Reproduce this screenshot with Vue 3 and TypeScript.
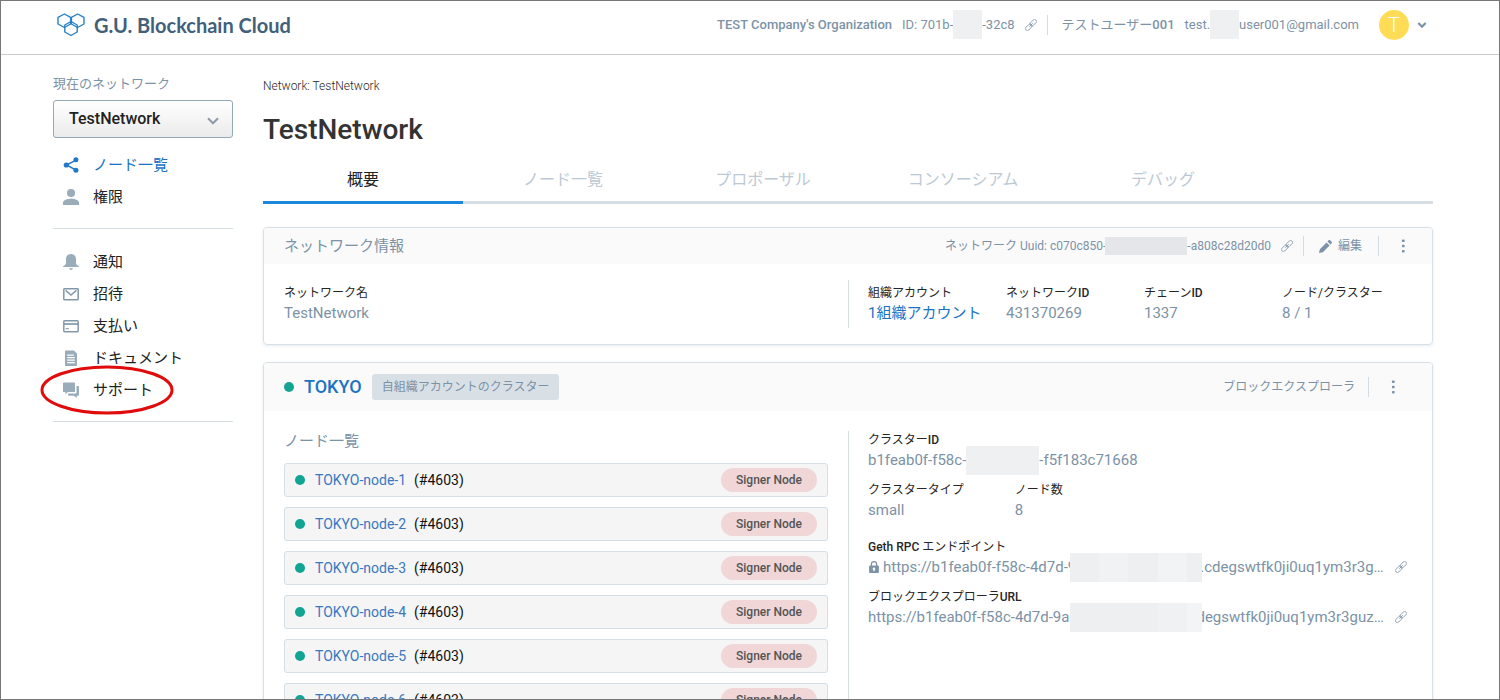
<script setup lang="ts">
import { ref } from 'vue'

interface NavItem {
  icon: 'share' | 'person' | 'bell' | 'mail' | 'card' | 'doc' | 'chat'
  label: string
  active?: boolean
  circled?: boolean
}

const networkNav: NavItem[] = [
  { icon: 'share', label: 'ノード一覧', active: true },
  { icon: 'person', label: '権限' },
]

const accountNav: NavItem[] = [
  { icon: 'bell', label: '通知' },
  { icon: 'mail', label: '招待' },
  { icon: 'card', label: '支払い' },
  { icon: 'doc', label: 'ドキュメント' },
  { icon: 'chat', label: 'サポート', circled: true },
]

const navGroups: NavItem[][] = [networkNav, accountNav]

const tabs: string[] = ['概要', 'ノード一覧', 'プロポーザル', 'コンソーシアム', 'デバッグ']
const activeTab = ref<number>(0)
const network = ref<string>('TestNetwork')

interface Fact {
  label: string
  suffix?: string
  value: string
  link?: boolean
}

const facts: Fact[] = [
  { label: '組織アカウント', value: '1組織アカウント', link: true },
  { label: 'ネットワーク', suffix: 'ID', value: '431370269' },
  { label: 'チェーン', suffix: 'ID', value: '1337' },
  { label: 'ノード/クラスター', value: '8 / 1' },
]

const nodes: string[] = [1, 2, 3, 4, 5, 6].map((n) => `TOKYO-node-${n}`)
</script>

<template>
  <div class="frame">
    <svg class="defs" width="0" height="0" aria-hidden="true">
      <symbol id="i-link" viewBox="0 0 12 12">
        <g transform="rotate(-45 6 6)" fill="none" stroke="currentColor" stroke-width="0.8">
          <rect x="-1" y="4.1" width="7.6" height="3.8" rx="1.7" />
          <rect x="5.4" y="4.1" width="7.6" height="3.8" rx="1.7" />
          <path d="M3.6 6h4.8" />
        </g>
      </symbol>
      <symbol id="i-dots" viewBox="0 0 4 14">
        <rect x="1" y="0.5" width="2.6" height="2.6" rx="0.7" />
        <rect x="1" y="5.7" width="2.6" height="2.6" rx="0.7" />
        <rect x="1" y="10.9" width="2.6" height="2.6" rx="0.7" />
      </symbol>
      <symbol id="i-share" viewBox="0 0 16 16">
        <path d="M13 3.2 3.6 8l9.4 5.2" fill="none" stroke="currentColor" stroke-width="1.5" />
        <circle cx="12.9" cy="2.8" r="2.5" />
        <circle cx="3.3" cy="8" r="2.6" />
        <circle cx="12.9" cy="13.3" r="2.5" />
      </symbol>
      <symbol id="i-person" viewBox="0 0 16 16">
        <circle cx="8" cy="4" r="4" />
        <path d="M0 16v-2.2C0 11.2 4.5 9.8 8 9.8s8 1.4 8 4V16z" />
      </symbol>
      <symbol id="i-bell" viewBox="0 0 16 16">
        <path d="M8 0C4.9 0 3 2.2 3 5.2v3.600c0 1.600-1 2.600-3 3.600v.6h16v-.6c-2-1-3-2-3-3.600V5.200C13 2.200 11.100 0 8 0zM6 14.200c.3 1.100 1 1.700 2 1.700s1.700-.6 2-1.700z" />
      </symbol>
      <symbol id="i-mail" viewBox="0 0 16 16">
        <rect x="0.8" y="2.8" width="14.4" height="10.9" rx="0.7" fill="none" stroke="currentColor" stroke-width="1.5" />
        <path d="M2.600 4.400 8 9l5.400-4.600" fill="none" stroke="currentColor" stroke-width="1.4" />
      </symbol>
      <symbol id="i-card" viewBox="0 0 16 16">
        <rect x="0.8" y="2.8" width="14.4" height="10.9" rx="0.9" fill="none" stroke="currentColor" stroke-width="1.5" />
        <path d="M1 6h14" fill="none" stroke="currentColor" stroke-width="1.7" />
        <path d="M2.600 10.700h3.200" fill="none" stroke="currentColor" stroke-width="1.1" />
      </symbol>
      <symbol id="i-doc" viewBox="0 0 16 16">
        <path fill-rule="evenodd" d="M2 1.200C2 .8 2.400.6 2.800.6H11l3 3v11.600c0 .4-.3.800-.8.800H2.800c-.5 0-.8-.4-.8-.8zM4.200 4.600v1.100h6.600V4.600zm0 2.500v1.100h7.600V7.100zm0 2.500v1.100h7.600V9.600zm0 2.500v1.100h7.600v-1.100z" />
      </symbol>
      <symbol id="i-chat" viewBox="0 0 16 16">
        <path d="M.8.400h10.400c.4 0 .8.300.8.700v8.300c0 .4-.4.700-.8.700H5l-2.600 2.200V10.100H.8c-.5 0-.8-.3-.8-.7V1.100C0 .7.300.400.8.400z" />
        <path d="M13.500 4h1.700c.5 0 .8.300.8.700v8.300c0 .4-.3.700-.8.700h-1.500v2.300l-2.700-2.300H5.800c-.4 0-.7-.3-.7-.7v-1.400h7.400c.6 0 1-.4 1-1z" />
      </symbol>
    </svg>

    <header class="topbar">
      <a class="brand" href="#">
        <svg class="brand-mark" viewBox="0 0 28 24" aria-hidden="true">
          <g fill="none" stroke="#2680c8" stroke-width="1.4" stroke-linejoin="round">
            <path d="M7.400 1 13.600 4.400V11L7.400 14.500 1 11V4.400z" />
            <path d="M20.600 1 27 4.400V11l-6.400 3.500L14.400 11V4.400z" />
            <path d="M14 8.500l6.200 3.500v7L14 22.500 7.800 19v-7z" />
          </g>
        </svg>
        <span>G.U. Blockchain Cloud</span>
      </a>
      <div class="account">
        <span class="strong">TEST Company's Organization</span>
        <span class="org-id">ID: 701b-<i class="mask mask-small"></i>-32c8</span>
        <button class="plain link-btn" type="button" aria-label="Copy ID"><svg class="i12"><use href="#i-link" /></svg></button>
        <span class="sep user-sep"></span>
        <span class="user">テストユーザー<b>001</b></span>
        <span class="email">test.<i class="mask mask-small"></i>user001@gmail.com</span>
        <button class="plain user-menu" type="button" aria-label="Account menu">
          <span class="avatar">T</span>
          <svg class="caret" viewBox="0 0 10 8" aria-hidden="true"><path d="M1.300 2 5 5.600 8.700 2" fill="none" stroke="currentColor" stroke-width="2.2" /></svg>
        </button>
      </div>
    </header>

    <div class="page">
      <aside class="sidebar">
        <label class="side-label" for="network">現在のネットワーク</label>
        <div class="select-wrap">
          <select id="network" v-model="network">
            <option>TestNetwork</option>
          </select>
          <svg class="select-caret" viewBox="0 0 12 8" aria-hidden="true"><path d="M1 1.300 6 6.200l5-4.900" fill="none" stroke="currentColor" stroke-width="2.1" /></svg>
        </div>
        <nav v-for="(group, g) in navGroups" :key="g" class="nav-group">
          <a v-for="item in group" :key="item.label" href="#" class="nav-item" :class="{ active: item.active }">
            <svg class="nav-icon" :class="'icon-' + item.icon" aria-hidden="true"><use :href="'#i-' + item.icon" /></svg>
            <span>{{ item.label }}</span>
            <svg v-if="item.circled" class="ring" viewBox="0 0 134 50" aria-hidden="true">
              <ellipse cx="67" cy="25" rx="65" ry="23" fill="none" stroke="#e00b0b" stroke-width="3" />
            </svg>
          </a>
        </nav>
      </aside>

      <main class="main">
        <p class="crumb">Network: TestNetwork</p>
        <h1>TestNetwork</h1>
        <div class="tabs" role="tablist">
          <button
            v-for="(tab, i) in tabs"
            :key="tab"
            type="button"
            role="tab"
            class="tab"
            :class="{ current: i === activeTab }"
            :aria-selected="i === activeTab"
            @click="activeTab = i"
          >{{ tab }}</button>
        </div>

        <section class="card">
          <div class="card-head info-head">
            <h2>ネットワーク情報</h2>
            <div class="tools">
              <span class="uuid">ネットワーク Uuid: c070c850-<i class="mask mask-uuid"></i>-a808c28d20d0</span>
              <button class="plain link-btn" type="button" aria-label="Copy Uuid"><svg class="i12"><use href="#i-link" /></svg></button>
              <span class="sep edit-sep"></span>
              <button class="plain edit" type="button">
                <svg class="pencil" viewBox="0 0 14 14" aria-hidden="true">
                  <path d="M0 14l.9-4.100L8.200 2.600l3.200 3.200-7.300 7.300zM9.100 1.700l1.300-1.300c.5-.5 1.100-.5 1.600 0l1.600 1.600c.5.5.5 1.100 0 1.600l-1.300 1.300z" />
                </svg>
                <span>編集</span>
              </button>
              <span class="sep dots-sep"></span>
              <button class="plain dots" type="button" aria-label="Menu"><svg class="dots-icon"><use href="#i-dots" /></svg></button>
            </div>
          </div>
          <div class="halves info-body">
            <dl class="pair info-name">
              <dt>ネットワーク名</dt>
              <dd>TestNetwork</dd>
            </dl>
            <div class="facts">
              <dl v-for="f in facts" :key="f.label" class="pair">
                <dt>{{ f.label }}<b v-if="f.suffix">{{ f.suffix }}</b></dt>
                <dd><a v-if="f.link" href="#">{{ f.value }}</a><template v-else>{{ f.value }}</template></dd>
              </dl>
            </div>
          </div>
        </section>

        <section class="card">
          <div class="card-head cluster-head">
            <div class="cluster-name">
              <span class="dot"></span>
              <a class="city" href="#">TOKYO</a>
              <span class="badge">自組織アカウントのクラスター</span>
            </div>
            <div class="tools">
              <a class="explorer" href="#">ブロックエクスプローラ</a>
              <span class="sep explorer-sep"></span>
              <button class="plain dots cluster-dots" type="button" aria-label="Menu"><svg class="dots-icon"><use href="#i-dots" /></svg></button>
            </div>
          </div>
          <div class="halves">
            <div class="nodes">
              <h3>ノード一覧</h3>
              <ul>
                <li v-for="n in nodes" :key="n">
                  <span class="dot"></span>
                  <a href="#">{{ n }}</a>
                  <span class="num">(#4603)</span>
                  <span class="pill">Signer Node</span>
                </li>
              </ul>
            </div>
            <div class="details">
              <dl class="pair">
                <dt>クラスター<b>ID</b></dt>
                <dd>b1feab0f-f58c-<i class="mask mask-id"></i>-f5f183c71668</dd>
              </dl>
              <div class="types">
                <dl class="pair">
                  <dt>クラスタータイプ</dt>
                  <dd>small</dd>
                </dl>
                <dl class="pair">
                  <dt>ノード数</dt>
                  <dd>8</dd>
                </dl>
              </div>
              <dl class="pair endpoint">
                <dt><b>Geth RPC</b> エンドポイント</dt>
                <dd>
                  <svg class="lock" viewBox="0 0 10 12" aria-hidden="true">
                    <path fill-rule="evenodd" d="M1 4.600h8c.5 0 .9.300.9.800v5.800c0 .4-.4.800-.9.800H1c-.5 0-.9-.4-.9-.8V5.400c0-.5.4-.8.900-.8zM5 6.500c-.8 0-1.300.6-1.300 1.300 0 .5.300.9.700 1.100v1.400h1.200V8.900c.4-.2.700-.6.700-1.100 0-.7-.5-1.300-1.300-1.300z" />
                    <path d="M2.400 5V3.200a2.600 2.600 0 0 1 5.200 0V5" fill="none" stroke="currentColor" stroke-width="1.2" />
                  </svg>
                  <span>https://b1feab0f-f58c-4d7d-9<i class="mask mask-url mask-rpc"></i>.cdegswtfk0ji0uq1ym3r3g…</span>
                  <button class="plain link-btn url-link" type="button" aria-label="Copy endpoint"><svg class="i12"><use href="#i-link" /></svg></button>
                </dd>
              </dl>
              <dl class="pair url-row">
                <dt>ブロックエクスプローラ<b>URL</b></dt>
                <dd>
                  <span>https://b1feab0f-f58c-4d7d-9a<i class="mask mask-url mask-explorer"></i>degswtfk0ji0uq1ym3r3guz…</span>
                  <button class="plain link-btn url-link" type="button" aria-label="Copy URL"><svg class="i12"><use href="#i-link" /></svg></button>
                </dd>
              </dl>
            </div>
          </div>
        </section>
      </main>
    </div>
  </div>
</template>

<style>
html,
body {
  height: 100%;
}
</style>

<style scoped>
.frame {
  box-sizing: border-box;
  height: 100vh;
  overflow: hidden;
  border: 1px solid #777;
  background: #fff;
  color: #262626;
  font-family: Roboto, 'Noto Sans CJK JP', sans-serif;
  font-size: 13px;
  white-space: nowrap;
}
.frame * {
  box-sizing: border-box;
}
.defs {
  position: absolute;
}
svg {
  display: block;
  flex: none;
  fill: currentColor;
}
a {
  color: #1a73c4;
  text-decoration: none;
}
b {
  font-weight: 500;
}
dl,
dd,
ul,
h1,
h2,
h3,
p {
  margin: 0;
  padding: 0;
}
.plain {
  display: flex;
  align-items: center;
  padding: 0;
  border: 0;
  background: none;
  color: inherit;
  font: inherit;
}

.topbar {
  display: flex;
  align-items: center;
  justify-content: space-between;
  height: 54px;
  padding: 0 72px 6px 56px;
  border-bottom: 1px solid #ccc;
}
.brand {
  display: flex;
  align-items: center;
  gap: 9px;
  color: #42607a;
  font: 700 20px/24px Lato, 'Open Sans', sans-serif;
}
.brand-mark {
  width: 28px;
  height: 24px;
}
.account {
  display: flex;
  align-items: center;
  color: #7c92a6;
  line-height: 20px;
}
.strong {
  font-weight: 500;
}
.org-id,
.email {
  display: flex;
  align-items: center;
  margin-left: 10px;
}
.mask {
  position: relative;
  display: inline-block;
  background: #eff0f2;
}
.mask-small {
  width: 29px;
  height: 29px;
}
.i12 {
  width: 12px;
  height: 12px;
}
.link-btn {
  margin-left: 10px;
}
.sep {
  width: 1px;
  height: 20px;
  background: #d3dce3;
}
.user-sep {
  margin: 0 14px 0 10px;
}
.user-menu {
  gap: 8px;
  margin-left: 20px;
}
.avatar {
  width: 30px;
  height: 30px;
  border-radius: 50%;
  background: #ffdc56;
  color: #fff;
  font-size: 20px;
  font-weight: 300;
  line-height: 30px;
  text-align: center;
}
.caret {
  width: 10px;
  height: 8px;
}

.page {
  display: flex;
  align-items: flex-start;
  gap: 30px;
  padding: 0 66px 0 52px;
}
.sidebar {
  flex: none;
  width: 180px;
  padding-top: 19px;
}
.side-label {
  display: block;
  color: #7c92a6;
  line-height: 20px;
}
.select-wrap {
  position: relative;
  margin: 6px 0 11px;
}
select {
  display: block;
  width: 100%;
  height: 38px;
  padding: 0 30px 1px 15px;
  border: 1px solid #94a8b8;
  border-radius: 3px;
  appearance: none;
  background: linear-gradient(#fff, #ebebeb);
  color: #222;
  font: 500 16px/20px Roboto, 'Noto Sans CJK JP', sans-serif;
}
.select-caret {
  position: absolute;
  top: 17px;
  right: 14px;
  width: 12px;
  height: 8px;
  color: #8f9ba6;
  pointer-events: none;
}
.nav-group {
  padding-bottom: 15px;
  margin-bottom: 17px;
  border-bottom: 1px solid #d5dee5;
}
.nav-item {
  position: relative;
  display: flex;
  align-items: center;
  gap: 14px;
  height: 32px;
  padding-left: 10px;
  color: #222;
  font-size: 15px;
}
.nav-item span {
  padding-bottom: 4px;
}
.nav-item.active {
  color: #1a73c4;
}
.nav-icon {
  width: 16px;
  height: 16px;
  color: #9aabba;
}
.nav-item.active .nav-icon {
  color: #1f78c8;
}
.icon-mail,
.icon-card {
  color: #8298aa;
}
.ring {
  position: absolute;
  top: -9px;
  left: -13px;
  width: 134px;
  height: 50px;
}

.main {
  flex: 1;
  min-width: 0;
  padding-top: 21px;
}
.crumb {
  font-size: 12px;
  font-weight: 300;
  line-height: 20px;
}
h1 {
  margin-top: 17px;
  color: #333;
  font-size: 28px;
  font-weight: 500;
  line-height: 34px;
}
.tabs {
  display: flex;
  height: 57px;
  box-shadow: inset 0 -3px #d8dfe4;
}
.tab {
  width: 200px;
  padding: 11px 0 0;
  border: 0;
  border-bottom: 3px solid transparent;
  background: none;
  color: #bcc9d4;
  font: 400 16px/20px Roboto, 'Noto Sans CJK JP', sans-serif;
}
.tab.current {
  border-color: #1f87db;
  color: #222;
}

.card {
  margin-top: 17px;
  border: 1px solid #d8e0e6;
  border-radius: 4px;
  box-shadow: 0 1px 3px rgba(110, 140, 160, 0.18);
  overflow: hidden;
}
.tabs + .card {
  margin-top: 23px;
}
.card-head {
  display: flex;
  align-items: center;
  justify-content: space-between;
  padding-left: 20px;
  background: #fafafa;
  color: #7c92a6;
}
.info-head {
  height: 36px;
}
.cluster-head {
  height: 48px;
}
h2,
h3 {
  color: #7c92a6;
  font-size: 15px;
  font-weight: 400;
  line-height: 20px;
}
.tools {
  display: flex;
  align-items: center;
  font-size: 12px;
  line-height: 18px;
}
.uuid {
  display: flex;
  align-items: center;
}
.mask-uuid {
  width: 82px;
  height: 18px;
  margin-left: -1px;
  background: #e4e6e9;
}
.edit-sep {
  margin: 0 15px 0 10px;
}
.edit {
  gap: 6px;
}
.pencil {
  width: 13px;
  height: 13px;
}
.dots-sep {
  margin-left: 16px;
}
.dots {
  justify-content: center;
  width: 48px;
  height: 20px;
  margin-right: 5px;
}
.dots-icon {
  width: 4px;
  height: 14px;
}
.explorer {
  color: #7c92a6;
}
.explorer-sep {
  margin-left: 13px;
}
.cluster-dots {
  margin-right: 15px;
}
.halves {
  display: grid;
  grid-template-columns: 1fr 1fr;
}
dt {
  font-size: 12px;
  line-height: 18px;
}
dd {
  display: flex;
  align-items: center;
  height: 22px;
  color: #7c92a6;
  font-size: 15px;
  line-height: 18px;
}
dd > span {
  display: flex;
  align-items: center;
}
.info-body {
  padding: 16px 0;
}
.info-name {
  padding: 4px 20px;
}
.facts {
  display: grid;
  grid-template-columns: repeat(4, 1fr);
  padding: 4px 12px 4px 19px;
  border-left: 1px solid #d5dee5;
}
.cluster-name {
  display: flex;
  align-items: center;
}
.dot {
  width: 10px;
  height: 10px;
  border-radius: 50%;
  background: #12a594;
}
.city {
  margin: 0 10px;
  font-size: 18px;
  font-weight: 500;
  line-height: 20px;
}
.badge {
  height: 26px;
  padding: 0 10px;
  border-radius: 3px;
  background: #d8e0e6;
  font-size: 12px;
  line-height: 26px;
}
.nodes {
  padding: 20px;
}
ul {
  display: grid;
  gap: 10px;
  margin-top: 12px;
  list-style: none;
}
li {
  display: flex;
  align-items: center;
  height: 34px;
  padding: 0 10px;
  border: 1px solid #d5dee5;
  border-radius: 3px;
  background: #f5f5f5;
  color: #111;
  font-size: 14px;
}
li a {
  margin: 0 8px 0 10px;
  color: #3a78c0;
}
.pill {
  height: 24px;
  margin-left: auto;
  padding: 0 15px;
  border-radius: 12px;
  background: #f0d6d6;
  color: #555;
  font-size: 12px;
  font-weight: 500;
  line-height: 24px;
}
.details {
  margin-top: 20px;
  padding-left: 19px;
  border-left: 1px solid #d5dee5;
}
.types {
  display: grid;
  grid-template-columns: 13fr 37fr;
  margin-top: 10px;
}
.endpoint {
  margin-top: 17px;
}
.url-row {
  margin-top: 10px;
}
.mask-id {
  width: 73px;
  height: 29px;
}
.mask-url {
  width: 132px;
  height: 29px;
  background: linear-gradient(90deg, #eeeff1 22%, #f1f2f4 22% 44%, #eeeff1 44% 67%, #f2f3f5 67% 89%, #eeeff1 89%);
}
.mask-rpc {
  margin: 0 -2px 0 -6px;
}
.mask-explorer {
  margin: 0 -6px 0 1px;
  background: linear-gradient(90deg, #eeeff1 67%, #f0f1f3 67% 89%, #f3f4f6 89%);
}
.lock {
  width: 10px;
  height: 12px;
  margin: 0 4px 0 1px;
}
.url-link {
  margin-left: 11px;
}
</style>
